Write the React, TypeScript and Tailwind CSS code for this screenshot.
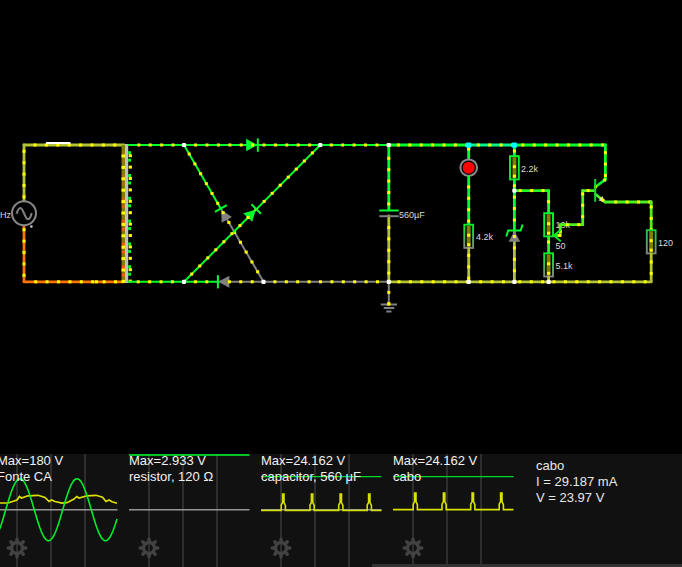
import React from "react";

const GREEN = "#00ff2f";
const LIME = "#4df021";
const OLIVE = "#b4c238";
const GREY = "#808080";
const ORANGE = "#ff7300";
const STEP = 11.4;
const TOP = 145;
const BOTTOM = 281.8;

type WireProps = {
  from: [number, number];
  to: [number, number];
  color: string;
  first?: number;
  width?: number;
};

function Wire({ from, to, color, first = 6, width = 2.8 }: WireProps) {
  const dx = to[0] - from[0];
  const dy = to[1] - from[1];
  const length = Math.hypot(dx, dy);
  const dots: [number, number][] = [];
  for (let d = first; d < length; d += STEP) {
    dots.push([from[0] + (dx * d) / length, from[1] + (dy * d) / length]);
  }
  return (
    <g>
      <line x1={from[0]} y1={from[1]} x2={to[0]} y2={to[1]} stroke={color} strokeWidth={width} strokeLinecap="round" />
      {dots.map(([x, y], i) => (
        <rect key={i} x={x - 1.5} y={y - 1.5} width={3} height={3} fill="#ffff00" />
      ))}
    </g>
  );
}

function Resistor({ x, y, fade }: { x: number; y: number; fade: string }) {
  return (
    <g>
      <rect x={x - 4.4} y={y} width={8.8} height={23.2} fill="black" stroke={fade} strokeWidth={1.9} />
      <line x1={x} y1={y + 1} x2={x} y2={y + 22.2} stroke="#7f7f00" strokeWidth={4} />
      <rect x={x - 1.5} y={y + 9} width={3} height={3} fill="#ffff00" />
      <rect x={x - 1.5} y={y + 18.5} width={3} height={3} fill="#ffff00" />
    </g>
  );
}

function Label({ x, y, children }: { x: number; y: number; children: string }) {
  return (
    <text x={x} y={y} fontSize={9} fill="#dcdcdc">
      {children}
    </text>
  );
}

function Node({ x, y, color = "#ffffff" }: { x: number; y: number; color?: string }) {
  const r = color === "#ffffff" ? 2.1 : 2.6;
  return <rect x={x - r} y={y - r} width={2 * r} height={2 * r} rx={1.2} fill={color} />;
}

function Circuit() {
  const turns = [0, 1, 2, 3, 4, 5];
  return (
    <svg
      viewBox="0 0 682 454"
      preserveAspectRatio="xMinYMin meet"
      className="block w-full"
      fontFamily='"Liberation Sans", Arial, sans-serif'
      role="img"
      aria-label="Circuito"
    >
      <defs>
        <linearGradient id="fadeGrey" x1="0" y1="0" x2="0" y2="1">
          <stop offset="0.1" stopColor="#00f030" />
          <stop offset="1" stopColor="#858585" />
        </linearGradient>
        <linearGradient id="fadeGreen" x1="0" y1="0" x2="0" y2="1">
          <stop offset="0" stopColor="#00ff2f" />
          <stop offset="1" stopColor="#0be536" />
        </linearGradient>
        <linearGradient id="fadeDim" x1="0" y1="0" x2="0" y2="1">
          <stop offset="0" stopColor="#10d23c" />
          <stop offset="1" stopColor="#858585" />
        </linearGradient>
      </defs>

      {/* AC source and primary loop */}
      <Wire from={[24, 201]} to={[24, TOP]} color={OLIVE} first={4.1} />
      <Wire from={[24, TOP]} to={[124, TOP]} color={OLIVE} first={11} />
      <Wire from={[24, 226]} to={[24, BOTTOM]} color={ORANGE} first={3.7} />
      <Wire from={[24, BOTTOM]} to={[124, BOTTOM]} color={ORANGE} first={11.7} />
      <rect x={95} y={280.3} width={3} height={3} fill="#ffff00" />
      <circle cx={24} cy={213.3} r={12} fill="black" stroke="#888888" strokeWidth={2} />
      <path d="M16.8 213.8 C17.6 210.2 19 208 20.5 208 C23.4 208.4 24.8 219 27.9 219.2 C29.6 219 31 216.6 31.6 213" fill="none" stroke="#808080" strokeWidth={2.1} />
      <circle cx={31.4} cy={226.5} r={1.3} fill="#cccccc" />
      <line x1={46} y1={143} x2={70.5} y2={143} stroke="#ffffff" strokeWidth={2} />
      <Label x={0} y={217.5}>Hz</Label>

      {/* transformer */}
      <line x1={123.3} y1={TOP} x2={123.3} y2={BOTTOM} stroke="#7f7f00" strokeWidth={3.5} />
      {turns.map((i) => (
        <g key={i} opacity={0.3 + i * 0.14}>
          <rect x={121.8} y={151.5 + i * 22.8} width={3.2} height={3} fill="#ff5a10" />
          <rect x={121.8} y={159.5 + i * 22.8} width={3.2} height={3} fill="#ff5a10" />
        </g>
      ))}
      {Array.from({ length: 12 }, (_, i) => (
        <rect key={i} x={121.5} y={154.5 + i * STEP} width={3.5} height={3} fill="#ffff00" />
      ))}
      <line x1={126.6} y1={144} x2={126.6} y2={283} stroke="#c0c0c0" strokeWidth={3.2} />
      {turns.map((i) => (
        <g key={i} fill={GREEN}>
          <rect x={128.2} y={151.2 + i * 22.8} width={2.8} height={3} />
          <rect x={128.2} y={158.7 + i * 22.8} width={2.8} height={3} />
        </g>
      ))}
      {Array.from({ length: 12 }, (_, i) => (
        <rect key={i} x={128.7} y={154.2 + i * STEP} width={3.2} height={3} fill="#ffff00" />
      ))}

      {/* bridge rectifier */}
      <Wire from={[128.5, TOP]} to={[184, TOP]} color={GREEN} first={10.3} width={2} />
      <path d="M246.2 138.8 V151.2 L257.5 145 Z" fill={GREEN} />
      <Wire from={[184, TOP]} to={[320.3, TOP]} color={GREEN} first={11.6} width={2} />
      <path d="M257.8 138.4 V151.8" stroke={GREEN} strokeWidth={2} />
      <Wire from={[320.3, TOP]} to={[388.8, TOP]} color={GREEN} first={11} width={2} />
      <path d="M229.4 275.8 V287.8 L218 281.8 Z" fill={GREY} />
      <Wire from={[128.5, BOTTOM]} to={[184, BOTTOM]} color={GREEN} first={9.7} width={2} />
      <Wire from={[184, BOTTOM]} to={[218, BOTTOM]} color={GREEN} first={11.4} width={2} />
      <Wire from={[218, BOTTOM]} to={[263.5, BOTTOM]} color={GREY} first={11.4} width={2} />
      <path d="M217.9 275.2 V288.4" stroke={GREEN} strokeWidth={2} />
      <Wire from={[263.5, BOTTOM]} to={[388.8, BOTTOM]} color={GREY} first={11.4} width={2} />
      <path d="M221.3 209.8 L231.9 217 L221.6 222.8 Z" fill={GREY} />
      <Wire from={[221, 209]} to={[263.5, BOTTOM]} color={GREY} first={4.3} width={2} />
      <Wire from={[184, TOP]} to={[221, 209]} color={GREEN} first={10.4} width={2} />
      <path d="M215 211.8 L226.8 205.2" stroke={GREEN} strokeWidth={2} />
      <path d="M255.8 209.7 L243.2 213.2 L252.2 221.8 Z" fill={GREEN} />
      <Wire from={[184, BOTTOM]} to={[320.3, TOP]} color={GREEN} first={10.9} width={2} />
      <path d="M251.5 204.3 L261 213.8" stroke={GREEN} strokeWidth={2} />

      {/* smoothing capacitor and ground */}
      <Wire from={[388.8, TOP]} to={[388.8, 210]} color={GREEN} first={13.3} />
      <Wire from={[388.8, 216]} to={[388.8, BOTTOM]} color={OLIVE} first={11.5} />
      <path d="M379.3 210.5 H398.7" stroke={GREEN} strokeWidth={2} />
      <path d="M379.3 216.2 H398.7" stroke={GREY} strokeWidth={2} />
      <Label x={399} y={218}>560µF</Label>
      <Wire from={[388.8, BOTTOM]} to={[388.8, 304]} color={GREY} first={10.6} width={2} />
      <path d="M380.8 304.5 H397 M383.7 308 H394.3 M386.3 311.6 H391.5" stroke={GREY} strokeWidth={2} />
      <rect x={387.3} y={302.5} width={3} height={3} fill="#ffff00" />

      {/* supply rails */}
      <Wire from={[388.8, TOP]} to={[468.7, TOP]} color={GREEN} first={9.6} />
      <Wire from={[468.7, TOP]} to={[514.4, TOP]} color="#00f68c" first={9.6} />
      <Wire from={[514.4, TOP]} to={[605.4, TOP]} color={GREEN} first={8.4} />
      <Wire from={[388.8, BOTTOM]} to={[468.7, BOTTOM]} color={OLIVE} first={10.2} />
      <Wire from={[468.7, BOTTOM]} to={[514.4, BOTTOM]} color={OLIVE} first={12} />
      <Wire from={[514.4, BOTTOM]} to={[651.2, BOTTOM]} color={OLIVE} first={5.4} />

      {/* lamp branch */}
      <Wire from={[468.7, TOP]} to={[468.7, 159]} color={GREEN} first={4} />
      <circle cx={468.7} cy={167.7} r={8.3} fill="black" stroke="#8c8c8c" strokeWidth={2} />
      <circle cx={468.7} cy={167.7} r={6} fill="#ff0000" />
      <Wire from={[468.7, 177]} to={[468.7, 224]} color={GREEN} first={9.9} />
      <Resistor x={468.7} y={224.7} fade="url(#fadeGrey)" />
      <Wire from={[468.7, 249]} to={[468.7, BOTTOM]} color={OLIVE} first={6.4} />
      <Label x={476} y={240}>4.2k</Label>

      {/* zener branch */}
      <Wire from={[514.4, TOP]} to={[514.4, 155]} color={GREEN} first={6} />
      <Resistor x={514.4} y={156.2} fade="url(#fadeGreen)" />
      <Wire from={[514.4, 180]} to={[514.4, 231]} color={GREEN} first={5.8} />
      <Wire from={[514.4, 233]} to={[514.4, BOTTOM]} color={OLIVE} first={3.5} />
      <path d="M514.4 231 L520.3 241.7 H508.6 Z" fill={GREY} />
      <rect x={512.9} y={235} width={3} height={3} fill="#ffff00" />
      <path d="M506.3 236.5 L508.2 230.5 H520.6 L522.6 224.5" fill="none" stroke={GREEN} strokeWidth={2} />
      <Label x={521} y={172}>2.2k</Label>

      {/* potentiometer branch */}
      <Label x={555.5} y={228}>10k</Label>
      <Label x={555.5} y={249}>50</Label>
      <Label x={555.5} y={269}>5.1k</Label>
      <Wire from={[514.4, 190.6]} to={[548.6, 190.6]} color="#20fa25" first={5.8} />
      <Wire from={[548.6, 190.6]} to={[548.6, 213]} color="#20fa25" first={11.1} />
      <Resistor x={548.6} y={213.2} fade="url(#fadeGreen)" />
      <Wire from={[548.6, 237]} to={[548.6, 253]} color="#2bf425" first={5} />
      <Resistor x={548.6} y={253.3} fade="url(#fadeGrey)" />
      <Wire from={[548.6, 277]} to={[548.6, BOTTOM]} color={OLIVE} first={12} />
      <Wire from={[560.3, 224.7]} to={[582.7, 224.7]} color={LIME} first={7} />
      <Wire from={[560.3, 235.5]} to={[560.3, 224.7]} color={LIME} first={4} />
      <Wire from={[553.5, 235.5]} to={[560.3, 235.5]} color="#19f42e" first={6} />
      <path d="M560.5 230 L553.8 235.5 L560.8 241.3" fill="none" stroke="#00e62b" strokeWidth={2} />
      <Wire from={[582.7, 224.7]} to={[582.7, 190.6]} color={LIME} first={8} />
      <Wire from={[582.7, 190.6]} to={[594, 190.6]} color={LIME} first={5.4} />

      {/* transistor and load */}
      <Wire from={[605.4, TOP]} to={[605.4, 179.5]} color={GREEN} first={7.7} />
      <Wire from={[605.4, 179.5]} to={[595.3, 187]} color={GREEN} first={1} />
      <Wire from={[595.3, 194]} to={[605, 202]} color={LIME} first={8} />
      <path d="M605 202 L598.6 200.6 L602.4 196 Z" fill="#d8e3a8" />
      <rect x={601.5} y={198.8} width={3} height={3} fill="#ffff00" />
      <path d="M595.2 179 V201.7" stroke="#08d838" strokeWidth={2} />
      <Wire from={[605, 202]} to={[651.2, 202]} color={LIME} first={10.7} />
      <Wire from={[651.2, 202]} to={[651.2, 230]} color={LIME} first={5} />
      <Resistor x={651.2} y={230.2} fade="url(#fadeDim)" />
      <Wire from={[651.2, 254]} to={[651.2, BOTTOM]} color={OLIVE} first={8} />
      <Label x={658} y={246}>120</Label>

      {[
        [184, TOP], [320.3, TOP], [388.8, TOP], [184, BOTTOM], [263.5, BOTTOM], [388.8, BOTTOM],
        [468.7, BOTTOM], [514.4, BOTTOM], [548.6, BOTTOM], [514.4, 190.6],
      ].map(([x, y]) => (
        <Node key={`${x}-${y}`} x={x} y={y} />
      ))}
      <Node x={468.7} y={145.2} color="#00ffff" />
      <Node x={514.4} y={145.2} color="#00ffff" />
    </svg>
  );
}

function Gear() {
  return (
    <svg width="22" height="22" viewBox="-11 -11 22 22" fill="none" stroke="#424242" aria-hidden="true">
      <circle r="5.5" strokeWidth="3.4" />
      {[0, 45, 90, 135, 180, 225, 270, 315].map((a) => (
        <path key={a} d="M0 -6 V-8.8" strokeWidth="3.4" strokeLinecap="round" transform={`rotate(${a})`} />
      ))}
    </svg>
  );
}

function Scope({ max, name, children, axis = true }: { max: string; name: string; children: React.ReactNode; axis?: boolean }) {
  return (
    <section className="relative h-full w-[132px] shrink-0">
      <svg width="121" height="113" className="block" aria-hidden="true">
        <path d="M20 0 V113 M54 0 V113 M88 0 V113" stroke="#2e2e2e" strokeWidth="2" />
        {axis && <path d="M0 55.7 H120.5" stroke="#969696" strokeWidth="1.4" />}
        {children}
      </svg>
      <p className="absolute top-[-1px] left-0 text-[13px] leading-4 whitespace-nowrap text-[#f2f2f2]">
        {max}
        <br />
        {name}
      </p>
      <button type="button" aria-label={`Configurar ${name}`} className="absolute bottom-2 left-[9px]">
        <Gear />
      </button>
    </section>
  );
}

const sine = Array.from({ length: 121 }, (_, x) => {
  const y = 55.7 - 31 * Math.cos((2 * Math.PI * (x - 23)) / 57);
  return `${x},${y.toFixed(1)}`;
}).join(" ");

const sourceCurrent =
  "0,49 11,49 20,46 22.5,42.5 24.5,44 31,41.8 41,41.3 48,43.5 52,47.5 54.5,46 58,47.5 65,49.2 70,48.7 77,45 79.7,42.5 82,44 90,41.8 99,41.3 105.5,43.3 109,47.5 112,46 115,47.7 120,49.3";

function pulses(base: number, peak: number) {
  const centers = [22.4, 51.2, 79.9, 108.4];
  const bumps = centers.map(
    (c) =>
      `H${c - 2.2} V${base - 5.5} L${c - 0.8} ${base - 8} V${peak} H${c + 0.6} V${base - 8} L${c + 2} ${base - 5} V${base}`,
  );
  return `M0 ${base} ${bumps.join(" ")} H120.5`;
}

export default function App() {
  return (
    <div className="flex min-h-screen flex-col overflow-hidden bg-black font-['Liberation_Sans',Arial,sans-serif]">
      <main className="flex-1">
        <Circuit />
      </main>
      <footer className="relative h-[113px] shrink-0 bg-[#111111]">
        <div className="-ml-[3px] flex h-full">
          <Scope max="Max=180 V" name="Fonte CA">
            <polyline points={sourceCurrent} fill="none" stroke="#dede00" strokeWidth="1.7" />
            <polyline points={sine} fill="none" stroke="#00ee2c" strokeWidth="1.6" />
          </Scope>
          <Scope max="Max=2.933 V" name="resistor, 120 Ω">
            <path d="M0 1 H120.5" stroke={GREEN} strokeWidth="1.5" />
          </Scope>
          <Scope max="Max=24.162 V" name="capacitor, 560 μF">
            <path d="M0 22.6 H120.5" stroke="#00dc2a" strokeWidth="1.4" />
            <path d={pulses(56.5, 40)} fill="none" stroke="#d4de00" strokeWidth="1.6" />
          </Scope>
          <Scope max="Max=24.162 V" name="cabo" axis={false}>
            <path d="M0 22.6 H120.5" stroke="#00dc2a" strokeWidth="1.4" />
            <path d={pulses(55.6, 39)} fill="none" stroke="#d8e300" strokeWidth="1.6" />
          </Scope>
          <p className="ml-[11px] pt-1 text-[13px] leading-4 whitespace-nowrap text-[#e8e8e8]">
            cabo
            <br />
            I = 29.187 mA
            <br />
            V = 23.97 V
          </p>
        </div>
        <div className="absolute right-0 bottom-0 left-[372px] h-[3px] bg-[#333333]" />
      </footer>
    </div>
  );
}
